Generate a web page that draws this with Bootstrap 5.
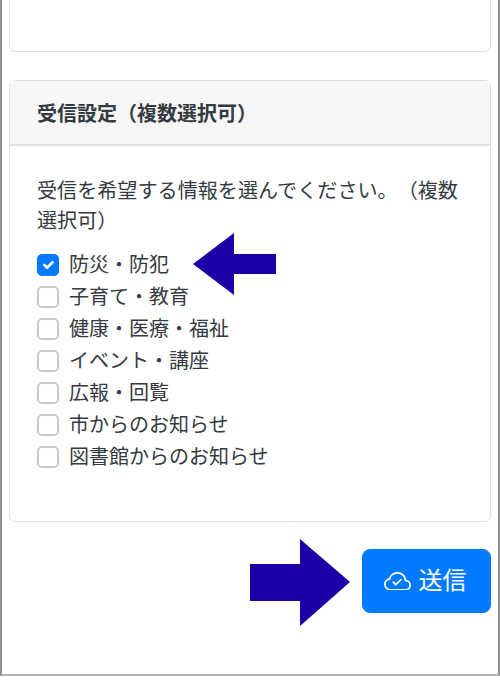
<!DOCTYPE html>
<html lang="ja">
<head>
<meta charset="utf-8">
<title>受信設定</title>
<link rel="stylesheet" href="https://cdn.jsdelivr.net/npm/bootstrap@5.3.0/dist/css/bootstrap.min.css">
<style>
html, body { background: #fff; }
body { font-family: "Liberation Sans", "Noto Sans CJK JP", sans-serif; color: #343a40; font-size: 20px; line-height: 1.5; text-spacing-trim: space-all; }
.frame { position: relative; height: 676px; border-left: 2px solid #8f8f8f; border-right: 2px solid #8f8f8f; border-bottom: 2px solid #b4b4b4; padding: 0 7px; }
.stub-card { height: 52px; border-radius: 0 0 6px 6px; border-top: 0; margin-bottom: 28px; border-color: #dfdfdf; }
.set-card { height: 442px; border-radius: 6px; border-color: #dfdfdf; }
.set-head { height: 65px; padding: 2px 27px 0; display: flex; align-items: center; background: #f6f6f6; font-size: 20px; font-weight: 700; color: #343a40; border-bottom: 2px solid #dfdfdf; }
.set-body { padding: 30px 27px 0; }
.lead-text { margin: 0 0 13px; line-height: 30px; font-size: 20.1px; }
.opt { display: flex; align-items: center; height: 32px; margin: 0; padding: 0; gap: 10px; }
.opt .form-check-input { width: 22px; height: 22px; margin: 0; flex: none; border-radius: 5px; border: 2px solid #c4c9d0; }
.opt .form-check-input:checked { background-color: #007bff; border-color: #007bff; }
.send-row { display: flex; justify-content: flex-end; padding-top: 27px; }
.send-btn { width: 129px; height: 64px; font-size: 24px; line-height: 1; border-radius: 8px; background: #007bff; border-color: #007bff; display: flex; align-items: center; justify-content: center; gap: 8px; padding: 0 3px 0 0; }
.send-btn svg { width: 27px; height: 18.6px; }
.arrow { position: absolute; }
.arrow-left { left: 190px; top: 233px; width: 84px; height: 62px; }
.arrow-right { left: 248px; top: 539px; width: 100px; height: 87px; }
</style>
</head>
<body>
<div class="frame">
  <div class="card stub-card"></div>
  <div class="card set-card">
    <div class="set-head">受信設定（複数選択可）</div>
    <div class="set-body">
      <p class="lead-text">受信を希望する情報を選んでください。（複数選択可）</p>
      <label class="opt"><input class="form-check-input" type="checkbox" checked>防災・防犯</label>
      <label class="opt"><input class="form-check-input" type="checkbox">子育て・教育</label>
      <label class="opt"><input class="form-check-input" type="checkbox">健康・医療・福祉</label>
      <label class="opt"><input class="form-check-input" type="checkbox">イベント・講座</label>
      <label class="opt"><input class="form-check-input" type="checkbox">広報・回覧</label>
      <label class="opt"><input class="form-check-input" type="checkbox">市からのお知らせ</label>
      <label class="opt"><input class="form-check-input" type="checkbox">図書館からのお知らせ</label>
    </div>
  </div>
  <div class="send-row">
    <button type="button" class="btn btn-primary send-btn">
      <svg viewBox="0 2 16 11" fill="#fff"><path fill-rule="evenodd" d="M10.354 6.146a.5.5 0 0 1 0 .708l-3 3a.5.5 0 0 1-.708 0l-1.5-1.5a.5.5 0 1 1 .708-.708L7 8.793l2.646-2.647a.5.5 0 0 1 .708 0z"/><path d="M4.406 3.342A5.53 5.53 0 0 1 8 2c2.69 0 4.923 2 5.166 4.579C14.758 6.804 16 8.137 16 9.773 16 11.569 14.502 13 12.687 13H3.781C1.708 13 0 11.366 0 9.318c0-1.763 1.266-3.223 2.942-3.593.143-.863.698-1.723 1.464-2.383zm.653.757c-.757.653-1.153 1.44-1.153 2.056v.448l-.445.049C2.064 6.805 1 7.952 1 9.318 1 10.785 2.23 12 3.781 12h8.906C13.98 12 15 10.988 15 9.773c0-1.216-1.02-2.228-2.313-2.228h-.5v-.5C12.188 4.825 10.328 3 8 3a4.53 4.53 0 0 0-2.941 1.1z"/></svg>
      送信
    </button>
  </div>
  <svg class="arrow arrow-left" viewBox="0 0 84 62"><polygon points="1,31 42,0 42,21 84,21 84,41 42,41 42,62" fill="#1a00a6"/></svg>
  <svg class="arrow arrow-right" viewBox="0 0 100 87"><polygon points="0,25 50,25 50,0 100,43 50,87 50,62 0,62" fill="#1a00a6"/></svg>
</div>
<script src="https://cdn.jsdelivr.net/npm/bootstrap@5.3.0/dist/js/bootstrap.bundle.min.js"></script>
</body>
</html>
